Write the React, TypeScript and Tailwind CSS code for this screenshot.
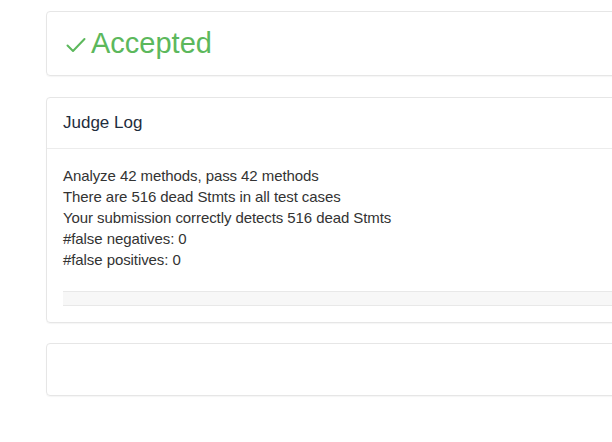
import React from "react";

export default function App() {
  const lines = [
    "Analyze 42 methods, pass 42 methods",
    "There are 516 dead Stmts in all test cases",
    "Your submission correctly detects 516 dead Stmts",
    "#false negatives: 0",
    "#false positives: 0",
  ];
  return (
    <div
      className="w-[612px] h-[442px] overflow-hidden bg-white pl-[46px] pt-[11px]"
      style={{ fontFamily: '"Liberation Sans", Arial, sans-serif' }}
    >
      <div className="w-[640px] flex flex-col">
        <div className="h-[65px] rounded border border-[#e6e6e6] shadow-[0_1px_1px_rgba(0,0,0,0.04)] flex items-center pl-[19px]">
          <svg width="20" height="16" viewBox="0 0 20 16" className="mr-[5px] mt-[3px]" fill="none">
            <path d="M1.5 8.5 L7 14 L18.5 2" stroke="#5cb85c" strokeWidth="2" strokeLinecap="round" strokeLinejoin="round" />
          </svg>
          <span className="text-[29px] leading-none text-[#5cb85c]">Accepted</span>
        </div>

        <div className="mt-[21px] rounded border border-[#e6e6e6] shadow-[0_1px_1px_rgba(0,0,0,0.04)]">
          <div className="h-[51px] border-b border-[#ececec] flex items-center px-4 text-[17px] text-[#1f2d3d]">
            Judge Log
          </div>
          <div className="px-4 pt-4 pb-4">
            <div className="text-[15px] leading-[21px] tracking-[-0.08px] text-[#333]">
              {lines.map((l) => (
                <div key={l}>{l}</div>
              ))}
            </div>
            <div className="mt-[21px] h-[15px] bg-[#f7f7f7] border-y border-[#e8e8e8]" />
          </div>
        </div>

        <div className="mt-[20px] h-[53px] rounded border border-[#e6e6e6] shadow-[0_1px_1px_rgba(0,0,0,0.04)]" />
      </div>
    </div>
  );
}
